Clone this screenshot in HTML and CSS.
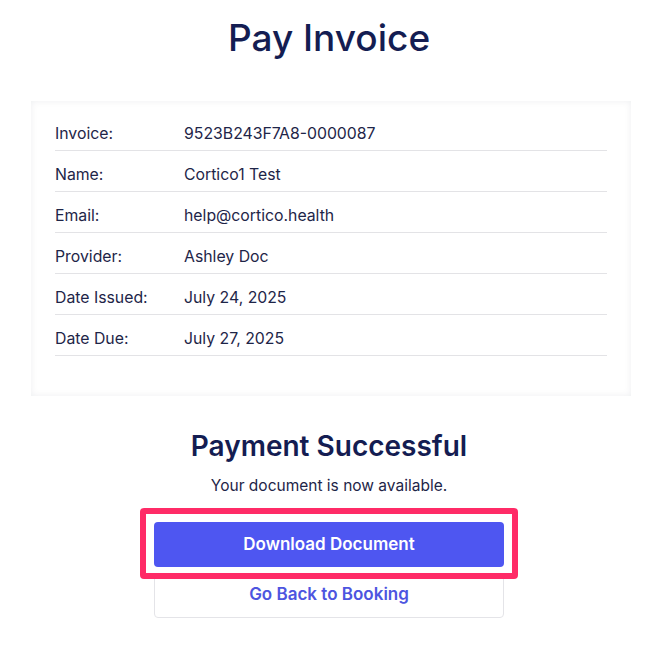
FILE: index.html
```html
<!DOCTYPE html>
<html lang="en">
<head>
    <meta charset="UTF-8">
    <meta name="viewport" content="width=device-width, initial-scale=1.0">
    <title>Pay Invoice</title>
    <link rel="stylesheet" href="styles.css">
</head>
<body>
    <div class="page">
        <h1 class="title">Pay Invoice</h1>

        <div class="invoice-card">
            <div class="invoice-row">
                <span class="label">Invoice:</span>
                <span class="value">9523B243F7A8-0000087</span>
            </div>
            <div class="invoice-row">
                <span class="label">Name:</span>
                <span class="value">Cortico1 Test</span>
            </div>
            <div class="invoice-row">
                <span class="label">Email:</span>
                <span class="value">help@cortico.health</span>
            </div>
            <div class="invoice-row">
                <span class="label">Provider:</span>
                <span class="value">Ashley Doc</span>
            </div>
            <div class="invoice-row">
                <span class="label">Date Issued:</span>
                <span class="value">July 24, 2025</span>
            </div>
            <div class="invoice-row">
                <span class="label">Date Due:</span>
                <span class="value">July 27, 2025</span>
            </div>
        </div>

        <div class="success">
            <h2>Payment Successful</h2>
            <p>Your document is now available.</p>
            <div class="actions">
                <div class="highlight">
                    <button class="btn btn-primary">Download Document</button>
                </div>
                <button class="btn btn-outline">Go Back to Booking</button>
            </div>
        </div>
    </div>
</body>
</html>
```

FILE: styles.css
```css
* {
    margin: 0;
    padding: 0;
    box-sizing: border-box;
}

body {
    font-family: Inter, "Open Sans", Arial, sans-serif;
    background: #fff;
    color: #1e2548;
}

.page {
    width: 658px;
}

.title {
    margin-top: 18px;
    text-align: center;
    font-size: 37px;
    line-height: 40px;
    font-weight: 500;
    color: #141d52;
}

.invoice-card {
    width: 600px;
    margin: 43px 0 0 31px;
    padding: 9px 24px 40px;
    background: #fff;
    box-shadow: inset 0 0 7px rgba(20, 30, 60, 0.07);
}

.invoice-row {
    display: flex;
    padding: 14px 0 6px;
    border-bottom: 1px solid #e3e3e6;
    font-size: 15.8px;
    line-height: 20px;
}

.invoice-row .label {
    width: 129px;
    flex-shrink: 0;
}

.success {
    margin-top: 34px;
    text-align: center;
}

.success h2 {
    font-size: 28px;
    line-height: 32px;
    font-weight: 600;
    color: #141d52;
}

.success p {
    margin-top: 14px;
    font-size: 15.5px;
    line-height: 20px;
}

.actions {
    width: 350px;
    margin: 26px auto 0;
    display: flex;
    flex-direction: column;
    gap: 6px;
}

/* pink annotation frame drawn over the layout, does not move the buttons */
.highlight {
    position: relative;
    z-index: 1;
    margin: -14px -14px -12px;
    padding: 8px 8px 6px;
    border: 6px solid #ff2b67;
    border-radius: 4px;
}

.btn {
    display: block;
    width: 100%;
    height: 44px;
    border-radius: 4px;
    font-family: Inter, "Open Sans", Arial, sans-serif;
    font-size: 17px;
    font-weight: 600;
    cursor: pointer;
}

.btn-primary {
    height: 45px;
    padding-bottom: 2px;
    background: #4e56f1;
    color: #fff;
    border: none;
}

.btn-outline {
    height: 45px;
    padding-bottom: 4px;
    background: #fff;
    color: #4d55e0;
    border: 1px solid #e4e4e8;
}
```
